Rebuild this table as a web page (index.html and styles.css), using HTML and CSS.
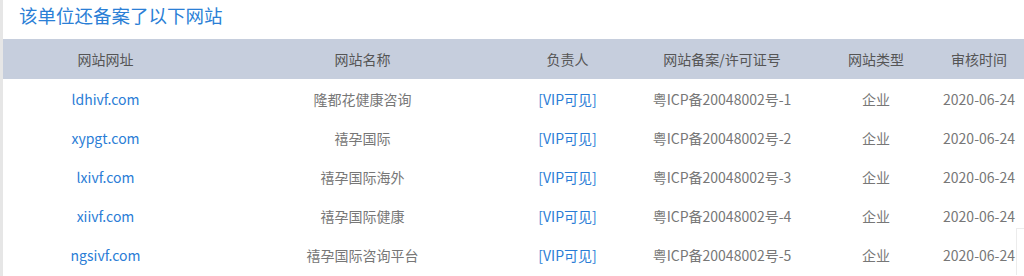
FILE: index.html
```html
<!DOCTYPE html>
<html lang="zh-CN">
<head>
<meta charset="utf-8">
<title>该单位还备案了以下网站</title>
<link rel="stylesheet" href="styles.css">
</head>
<body>
<div class="page">
  <div class="strip"></div>
  <div class="content">
    <h2 class="title">该单位还备案了以下网站</h2>
    <div class="table">
      <div class="row head">
        <div class="cell">网站网址</div>
        <div class="cell">网站名称</div>
        <div class="cell">负责人</div>
        <div class="cell">网站备案/许可证号</div>
        <div class="cell">网站类型</div>
        <div class="cell">审核时间</div>
      </div>
      <div class="row">
        <div class="cell link">ldhivf.com</div>
        <div class="cell">隆都花健康咨询</div>
        <div class="cell link">[VIP可见]</div>
        <div class="cell">粤ICP备20048002号-1</div>
        <div class="cell">企业</div>
        <div class="cell">2020-06-24</div>
      </div>
      <div class="row">
        <div class="cell link">xypgt.com</div>
        <div class="cell">禧孕国际</div>
        <div class="cell link">[VIP可见]</div>
        <div class="cell">粤ICP备20048002号-2</div>
        <div class="cell">企业</div>
        <div class="cell">2020-06-24</div>
      </div>
      <div class="row">
        <div class="cell link">lxivf.com</div>
        <div class="cell">禧孕国际海外</div>
        <div class="cell link">[VIP可见]</div>
        <div class="cell">粤ICP备20048002号-3</div>
        <div class="cell">企业</div>
        <div class="cell">2020-06-24</div>
      </div>
      <div class="row">
        <div class="cell link">xiivf.com</div>
        <div class="cell">禧孕国际健康</div>
        <div class="cell link">[VIP可见]</div>
        <div class="cell">粤ICP备20048002号-4</div>
        <div class="cell">企业</div>
        <div class="cell">2020-06-24</div>
      </div>
      <div class="row">
        <div class="cell link">ngsivf.com</div>
        <div class="cell">禧孕国际咨询平台</div>
        <div class="cell link">[VIP可见]</div>
        <div class="cell">粤ICP备20048002号-5</div>
        <div class="cell">企业</div>
        <div class="cell">2020-06-24</div>
      </div>
    </div>
  </div>
  <div class="float-box"></div>
</div>
</body>
</html>
```

FILE: styles.css
```css
html, body {
  margin: 0;
  padding: 0;
  background: #ffffff;
  overflow: hidden;
}
body {
  font-family: "Noto Sans CJK SC", "Noto Sans", sans-serif;
  width: 1024px;
  height: 276px;
}
.page {
  position: relative;
  display: flex;
  width: 1024px;
  height: 276px;
  overflow: hidden;
}
.strip {
  flex: 0 0 3px;
  background: #e6e6e6;
}
.content {
  flex: 0 0 auto;
  display: flex;
  flex-direction: column;
}
.title {
  margin: 0;
  height: 39px;
  padding-left: 16px;
  font-size: 18.5px;
  font-weight: normal;
  color: #2b7fd6;
  line-height: 31px;
  letter-spacing: 0;
}
.table {
  display: flex;
  flex-direction: column;
}
.row {
  display: grid;
  grid-template-columns: 205px 309px 101px 208px 100px 106px;
  height: 39.2px;
  align-items: center;
  font-size: 14px;
  color: #777777;
}
.row.head {
  height: 40px;
  background: #c6cedd;
  color: #555555;
}
.cell {
  display: flex;
  justify-content: center;
  white-space: nowrap;
}
.cell.link {
  color: #2a7dd6;
}
.float-box {
  position: absolute;
  left: 1016px;
  top: 228px;
  width: 20px;
  height: 46px;
  border: 1px solid #ececec;
  border-bottom: 0;
  background: #ffffff;
}
```
